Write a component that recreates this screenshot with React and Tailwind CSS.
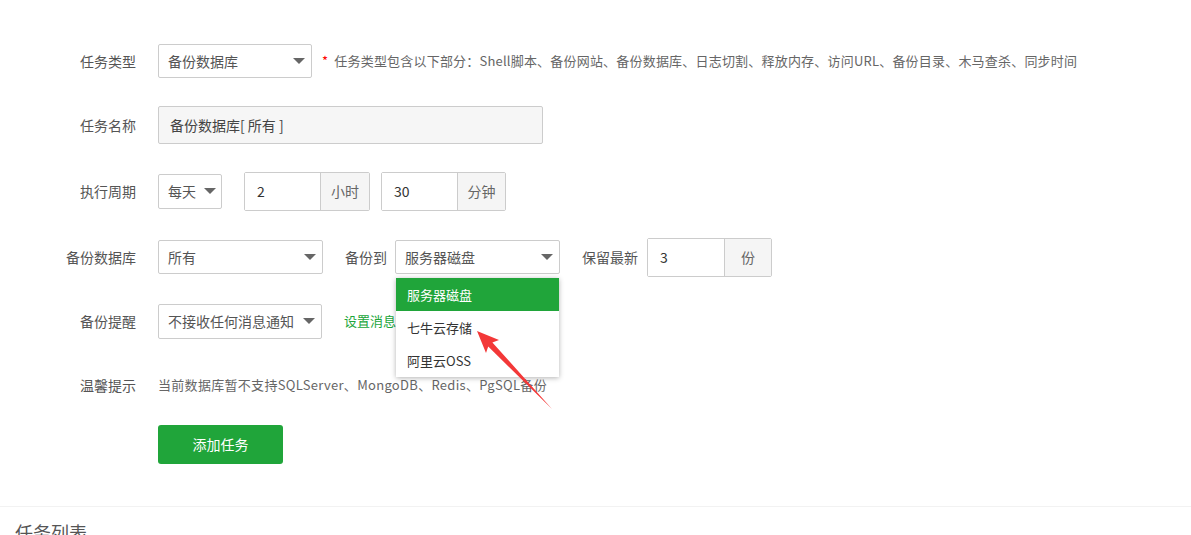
import React from 'react';

const font = { fontFamily: '"Noto Sans CJK SC", "Noto Sans", sans-serif' };

function Caret() {
  return <span className="ml-2 h-0 w-0 border-x-[6px] border-t-[6px] border-x-transparent border-t-[#666]" />;
}

function Select({ value, width, height = 'h-[34px]' }) {
  return (
    <div className={`${width} ${height} flex items-center justify-between rounded-[2px] border border-[#ccc] bg-white pl-[9px] pr-[6px] text-[14px] text-[#555]`}>
      <span className="whitespace-nowrap">{value}</span>
      <Caret />
    </div>
  );
}

function InputGroup({ value, unit, inputW, unitW }) {
  return (
    <div className="flex h-[39px] rounded-[2px] border border-[#ccc] text-[14px]">
      <div className={`${inputW} flex items-center bg-white pl-[12px] text-[#333]`}>{value}</div>
      <div className={`${unitW} flex items-center justify-center border-l border-[#ccc] bg-[#f5f5f5] text-[#666]`}>{unit}</div>
    </div>
  );
}

function Label({ children }) {
  return <div className="w-[136px] shrink-0 text-right text-[14px] text-[#555]">{children}</div>;
}

export default function App() {
  return (
    <div className="relative min-h-[535px] w-[1191px] overflow-hidden bg-white" style={font}>
      <div className="pt-[41px]">
        {/* 任务类型 */}
        <div className="flex h-[40px] items-center">
          <Label>任务类型</Label>
          <div className="ml-[22px]">
            <Select value="备份数据库" width="w-[154px]" />
          </div>
          <div className="ml-[10px] text-[13px] tracking-[0.2px] text-[#666]">
            <span className="mr-[6px] text-[#f00]">*</span>
            任务类型包含以下部分：Shell脚本、备份网站、备份数据库、日志切割、释放内存、访问URL、备份目录、木马查杀、同步时间
          </div>
        </div>

        {/* 任务名称 */}
        <div className="mt-[24px] flex h-[40px] items-center">
          <Label>任务名称</Label>
          <div className="ml-[22px] flex h-[38px] w-[385px] items-center rounded-[2px] border border-[#ccc] bg-[#f6f6f6] pl-[11px] text-[14px] text-[#444]">
            备份数据库[ 所有 ]
          </div>
        </div>

        {/* 执行周期 */}
        <div className="mt-[26px] flex h-[40px] items-center">
          <Label>执行周期</Label>
          <div className="ml-[22px]">
            <Select value="每天" width="w-[64px]" height="h-[35px]" />
          </div>
          <div className="ml-[22px]">
            <InputGroup value="2" unit="小时" inputW="w-[75px]" unitW="w-[49px]" />
          </div>
          <div className="ml-[11px]">
            <InputGroup value="30" unit="分钟" inputW="w-[75px]" unitW="w-[48px]" />
          </div>
        </div>

        {/* 备份数据库 */}
        <div className="mt-[26px] flex h-[40px] items-center">
          <Label>备份数据库</Label>
          <div className="ml-[22px]">
            <Select value="所有" width="w-[165px]" />
          </div>
          <div className="ml-[22px] text-[14px] text-[#555]">备份到</div>
          <div className="relative ml-[8px]">
            <Select value="服务器磁盘" width="w-[165px]" />
            <div className="absolute left-[1px] top-[38px] z-10 w-[163px] bg-white text-[13px] text-[#333] shadow-[0_1px_5px_rgba(0,0,0,0.3)]">
              <div className="flex h-[33px] items-center bg-[#20a53a] pl-[11px] text-white">服务器磁盘</div>
              <div className="flex h-[33px] items-center pl-[11px]">七牛云存储</div>
              <div className="flex h-[33px] items-center pl-[11px]">阿里云OSS</div>
            </div>
          </div>
          <div className="ml-[22px] text-[14px] text-[#555]">保留最新</div>
          <div className="ml-[9px]">
            <InputGroup value="3" unit="份" inputW="w-[76px]" unitW="w-[47px]" />
          </div>
        </div>

        {/* 备份提醒 */}
        <div className="mt-[24px] flex h-[40px] items-center">
          <Label>备份提醒</Label>
          <div className="ml-[22px]">
            <Select value="不接收任何消息通知" width="w-[164px]" height="h-[35px]" />
          </div>
          <div className="ml-[22px] text-[13px] text-[#20a53a]">设置消息通道</div>
        </div>

        {/* 温馨提示 */}
        <div className="mt-[24px] flex h-[40px] items-center">
          <Label>温馨提示</Label>
          <div className="ml-[22px] text-[13px] tracking-[0.3px] text-[#666]">当前数据库暂不支持SQLServer、MongoDB、Redis、PgSQL备份</div>
        </div>

        <div className="mt-[20px] flex pl-[158px]">
          <button className="h-[39px] w-[125px] rounded-[3px] bg-[#20a53a] text-[14px] text-white">添加任务</button>
        </div>

        <div className="mt-[42px] border-t border-[#f2f2f2] bg-white pl-[15px] pt-[12px] text-[18px] text-[#555]">任务列表</div>
      </div>

      <svg className="pointer-events-none absolute left-0 top-0 z-20" width="1191" height="535">
        <polygon points="477,331 499,340 492.4,342.4 552,409 488.2,346.6 486,353" fill="#f33838" />
      </svg>
    </div>
  );
}
